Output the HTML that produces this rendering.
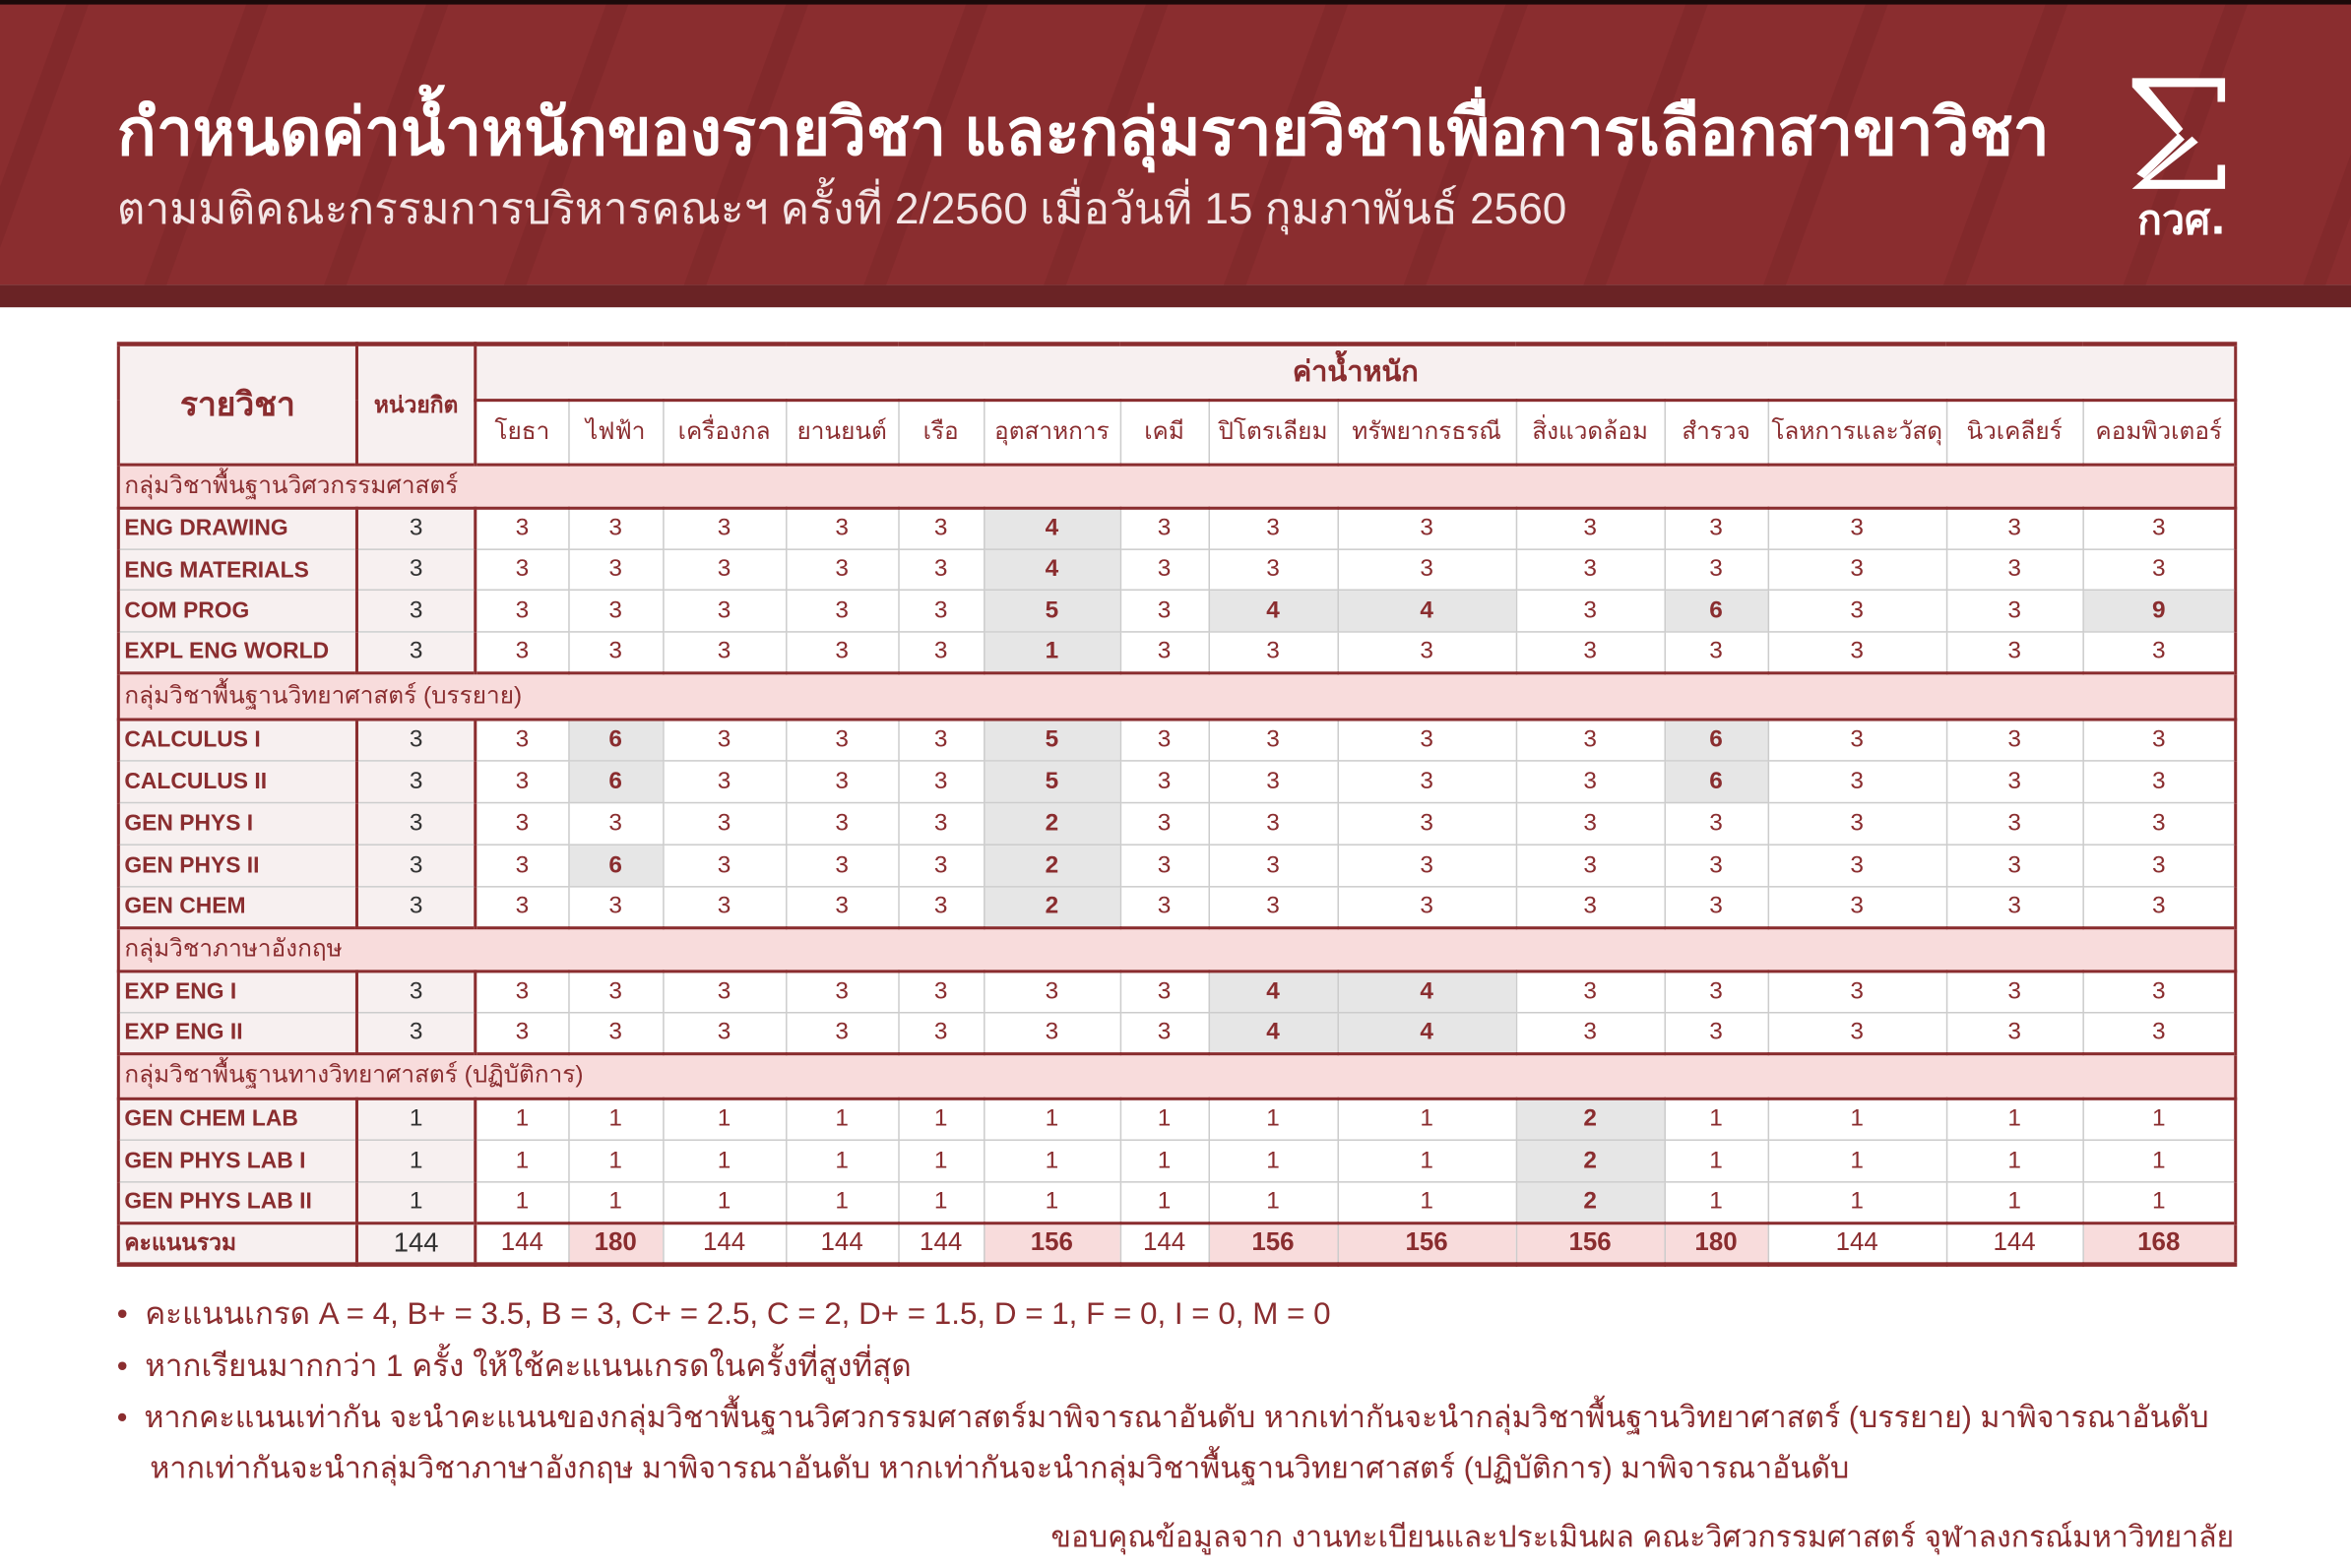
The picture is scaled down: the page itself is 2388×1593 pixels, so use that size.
<!DOCTYPE html>
<html><head><meta charset="utf-8"><style>
html,body{margin:0;padding:0;background:#fff;width:2388px;height:1592px;overflow:hidden}
#w{position:absolute;left:0;top:0;width:1568px;height:1046px;transform:scale(1.52296);transform-origin:0 0;font-family:"Liberation Sans","DejaVu Sans",sans-serif}
.hd{position:absolute;left:0;top:0;width:1568px;height:190px;background:#8a2d2f;overflow:hidden}
.hd2{position:absolute;left:0;top:190px;width:1568px;height:15px;background:#6a2325}
.topline{position:absolute;left:0;top:0;width:1568px;height:3px;background:#1a0a0a}
.t1{position:absolute;left:78px;top:54px;color:#fff;font-size:43.5px;font-weight:bold;white-space:nowrap;letter-spacing:-0.3px}
.t2{position:absolute;left:78px;top:116px;color:#f3e6e6;font-size:29px;white-space:nowrap}
table{position:absolute;left:78px;top:228px;border-collapse:collapse;table-layout:fixed;width:1412px;color:#8a2d2f;font-size:16px}
td{border:1px solid #ccc;text-align:center;padding:0;white-space:nowrap;overflow:hidden}
.lb{text-align:left;background:#f7f0f0;font-weight:bold;font-size:15px;padding-left:3px;border-right:2px solid #8a2d2f}
.cr{background:#f7f0f0;color:#333;border-right:2px solid #8a2d2f}
.g td{background:#f8dcdc;text-align:left;padding-left:3px;border-top:2px solid #8a2d2f;border-bottom:2px solid #8a2d2f;font-size:16px}
.h{background:#e6e6e6;font-weight:bold}
.p{background:#f8dcdc;font-weight:bold}
.hh td{background:#f7f0f0;font-size:16px}
.n{position:absolute;left:78px;color:#8a2d2f;font-size:20.6px;white-space:nowrap}
</style></head><body><div id="w">
<div class="hd">
<svg width="1568" height="190" style="position:absolute;left:0;top:0" fill="none" stroke="#7e282a" stroke-width="14" opacity="0.6">
<path d="M-20 200 L60 -20 M100 200 L180 -20 M220 200 L300 -20 M340 200 L420 -20 M460 200 L540 -20 M580 200 L660 -20 M700 200 L780 -20 M820 200 L900 -20 M940 200 L1020 -20 M1060 200 L1140 -20 M1180 200 L1260 -20 M1300 200 L1380 -20 M1420 200 L1500 -20 M1540 200 L1620 -20"/>
</svg>
<div class="topline"></div>
<div class="t1">กำหนดค่าน้ำหนักของรายวิชา และกลุ่มรายวิชาเพื่อการเลือกสาขาวิชา</div>
<div class="t2">ตามมติคณะกรรมการบริหารคณะฯ ครั้งที่ 2/2560 เมื่อวันที่ 15 กุมภาพันธ์ 2560</div>
<svg style="position:absolute;left:1422px;top:52px" width="66" height="108" viewBox="0 0 66 108" fill="#fff">
<path d="M0 0 H62 V16 H57 V6 H11 L34 34 L30 38 L0 6 Z"/>
<path d="M3 64 L31 37 L35 41 L8 67 Z"/>
<path d="M0 74 L40 39 L44 43 L12 68 H57 V58 H62 V74 Z"/>
<text x="33" y="104" text-anchor="middle" font-size="27" font-weight="bold" font-family="DejaVu Sans,sans-serif">กวศ.</text>
</svg>
</div>
<div class="hd2"></div>

<table>
<colgroup><col style="width:159px"><col style="width:79px"><col style="width:62px"><col style="width:63px"><col style="width:82px"><col style="width:75px"><col style="width:57px"><col style="width:91px"><col style="width:59px"><col style="width:86px"><col style="width:119px"><col style="width:99px"><col style="width:69px"><col style="width:119px"><col style="width:91px"><col style="width:102px"></colgroup>
<tr class="hh" style="height:37px;border-top:3px solid #8a2d2f"><td rowspan="2" style="font-size:22px;font-weight:bold;background:#f7f0f0;border-left:2px solid #8a2d2f;border-right:2px solid #8a2d2f">รายวิชา</td><td rowspan="2" style="font-weight:bold;font-size:15px;border-right:2px solid #8a2d2f">หน่วยกิต</td><td colspan="14" style="font-weight:bold;font-size:19px;border-bottom:2px solid #8a2d2f;border-right:2px solid #8a2d2f">ค่าน้ำหนัก</td></tr>
<tr style="height:43px;font-size:16px"><td>โยธา</td><td>ไฟฟ้า</td><td>เครื่องกล</td><td>ยานยนต์</td><td>เรือ</td><td>อุตสาหการ</td><td>เคมี</td><td>ปิโตรเลียม</td><td>ทรัพยากรธรณี</td><td>สิ่งแวดล้อม</td><td>สำรวจ</td><td>โลหการและวัสดุ</td><td>นิวเคลียร์</td><td style="border-right:2px solid #8a2d2f">คอมพิวเตอร์</td></tr>
</table>
<script>
var rows=[
["g","กลุ่มวิชาพื้นฐานวิศวกรรมศาสตร์",29],
["ENG DRAWING","3",[3,3,3,3,3,"*4",3,3,3,3,3,3,3,3],28],
["ENG MATERIALS","3",[3,3,3,3,3,"*4",3,3,3,3,3,3,3,3],27],
["COM PROG","3",[3,3,3,3,3,"*5",3,"*4","*4",3,"*6",3,3,"*9"],28],
["EXPL ENG WORLD","3",[3,3,3,3,3,"*1",3,3,3,3,3,3,3,3],27],
["g","กลุ่มวิชาพื้นฐานวิทยาศาสตร์ (บรรยาย)",31],
["CALCULUS I","3",[3,"*6",3,3,3,"*5",3,3,3,3,"*6",3,3,3],28],
["CALCULUS II","3",[3,"*6",3,3,3,"*5",3,3,3,3,"*6",3,3,3],28],
["GEN PHYS I","3",[3,3,3,3,3,"*2",3,3,3,3,3,3,3,3],28],
["GEN PHYS II","3",[3,"*6",3,3,3,"*2",3,3,3,3,3,3,3,3],28],
["GEN CHEM","3",[3,3,3,3,3,"*2",3,3,3,3,3,3,3,3],27],
["g","กลุ่มวิชาภาษาอังกฤษ",29],
["EXP ENG I","3",[3,3,3,3,3,3,3,"*4","*4",3,3,3,3,3],28],
["EXP ENG II","3",[3,3,3,3,3,3,3,"*4","*4",3,3,3,3,3],27],
["g","กลุ่มวิชาพื้นฐานทางวิทยาศาสตร์ (ปฏิบัติการ)",30],
["GEN CHEM LAB","1",[1,1,1,1,1,1,1,1,1,"*2",1,1,1,1],28],
["GEN PHYS LAB I","1",[1,1,1,1,1,1,1,1,1,"*2",1,1,1,1],28],
["GEN PHYS LAB II","1",[1,1,1,1,1,1,1,1,1,"*2",1,1,1,1],27],
["t","คะแนนรวม","144",[144,"+180",144,144,144,"+156",144,"+156","+156","+156","+180",144,144,"+168"],28]
];
var t=document.querySelector("table"),h="";
rows.forEach(function(r){
 if(r[0]=="g"){h+='<tr class="g" style="height:'+r[2]+'px"><td colspan="16" style="border-left:2px solid #8a2d2f;border-right:2px solid #8a2d2f">'+r[1]+'</td></tr>';return;}
 var tot=r[0]=="t"; if(tot) r=r.slice(1);
 var s='<tr style="height:'+r[3]+'px'+(tot?';border-top:2px solid #8a2d2f;border-bottom:3px solid #8a2d2f':'')+'"><td class="lb" style="border-left:2px solid #8a2d2f">'+r[0]+'</td><td class="cr"'+(tot?' style="font-size:18px"':'')+'>'+r[1]+'</td>';
 r[2].forEach(function(v,i){v=String(v);var c="";if(v[0]=="*"){c="h";v=v.slice(1)}else if(v[0]=="+"){c="p";v=v.slice(1)}
 s+='<td class="'+c+'" style="'+(tot?'font-size:17px;':'')+(i==13?'border-right:2px solid #8a2d2f':'')+'">'+v+'</td>';});
 h+=s+'</tr>';});
t.insertAdjacentHTML("beforeend",h);
</script>
<div class="n" style="top:860px">•&nbsp; คะแนนเกรด A = 4, B+ = 3.5, B = 3, C+ = 2.5, C = 2, D+ = 1.5, D = 1, F = 0, I = 0, M = 0</div>
<div class="n" style="top:895px">•&nbsp; หากเรียนมากกว่า 1 ครั้ง ให้ใช้คะแนนเกรดในครั้งที่สูงที่สุด</div>
<div class="n" style="top:929px;font-size:20px">•&nbsp; หากคะแนนเท่ากัน จะนำคะแนนของกลุ่มวิชาพื้นฐานวิศวกรรมศาสตร์มาพิจารณาอันดับ หากเท่ากันจะนำกลุ่มวิชาพื้นฐานวิทยาศาสตร์ (บรรยาย) มาพิจารณาอันดับ</div>
<div class="n" style="top:963px;left:100px;font-size:20px">หากเท่ากันจะนำกลุ่มวิชาภาษาอังกฤษ มาพิจารณาอันดับ หากเท่ากันจะนำกลุ่มวิชาพื้นฐานวิทยาศาสตร์ (ปฏิบัติการ) มาพิจารณาอันดับ</div>
<div class="n" style="top:1009px;left:auto;right:78px;font-size:19.8px">ขอบคุณข้อมูลจาก งานทะเบียนและประเมินผล คณะวิศวกรรมศาสตร์ จุฬาลงกรณ์มหาวิทยาลัย</div>
</div></body></html>
